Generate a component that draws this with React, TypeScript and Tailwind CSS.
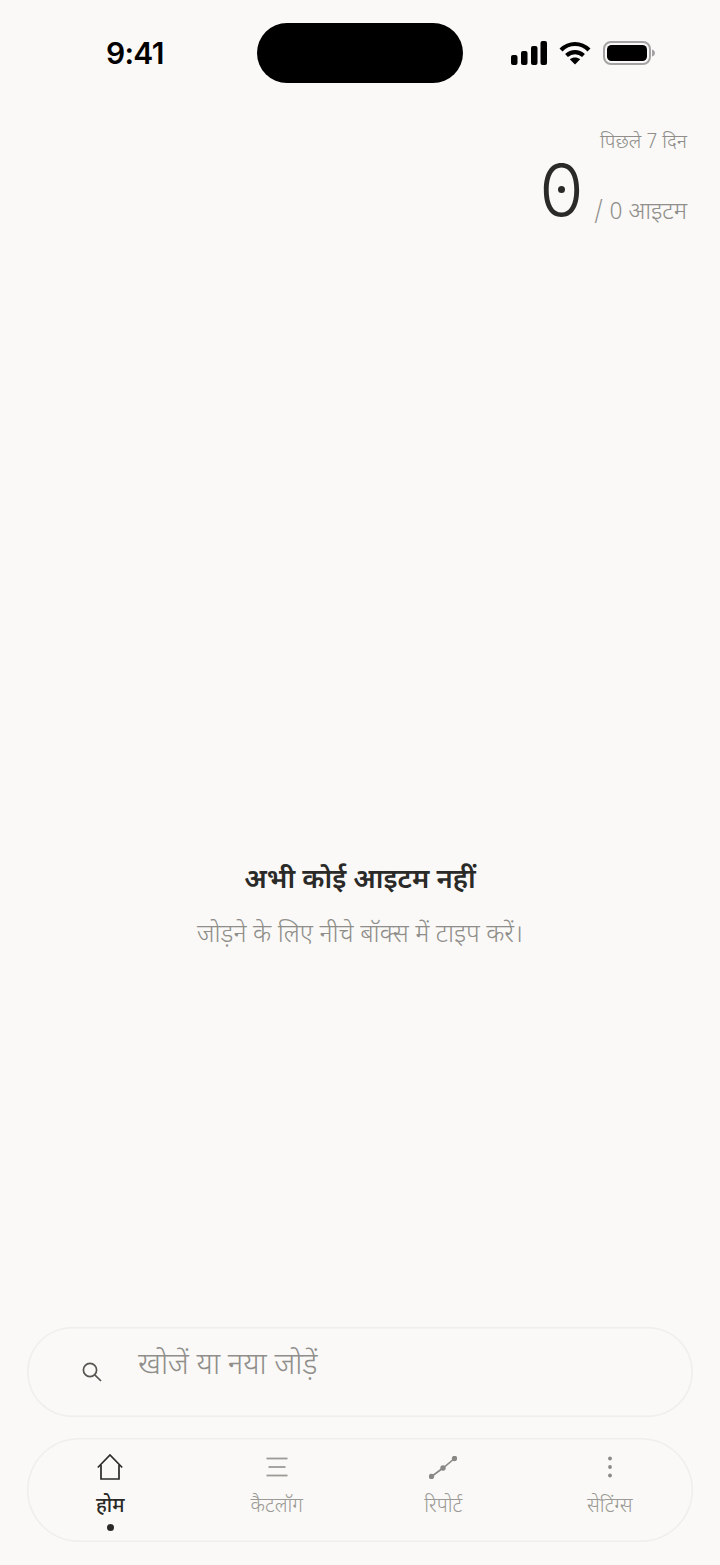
const deva = "font-['Noto_Sans_Devanagari','Noto_Sans','Lohit_Devanagari','Liberation_Sans',sans-serif]";

function StatusBar() {
    return (
        <div className="flex items-start h-[106px] pt-[23px] pl-[106px] pr-[64px]">
            <span className="w-[151px] mt-[11px] text-[30px] leading-[38px] tracking-[-0.7px] font-semibold text-black font-['Inter',sans-serif]">9:41</span>
            <div className="w-[206px] h-[60px] bg-black rounded-full" />
            <div className="flex items-center gap-[12px] ml-[48px] h-[60px]">
                <svg width="36" height="24" viewBox="0 0 36 24" fill="#000">
                    <rect x="0" y="14" width="6.5" height="10" rx="2" />
                    <rect x="10" y="10" width="6.5" height="14" rx="2" />
                    <rect x="20" y="5" width="6.5" height="19" rx="2" />
                    <rect x="29.5" y="0" width="6.5" height="24" rx="2" />
                </svg>
                <svg width="32" height="24" viewBox="0 0 32 24" fill="none" stroke="#000" strokeWidth="4.2">
                    <path d="M2 9 C10 1 22 1 30 9" />
                    <path d="M7.5 14.5 C12.5 10 19.5 10 24.5 14.5" />
                    <path d="M16 23.5 L10.8 18.2 C13.8 15.8 18.2 15.8 21.2 18.2 Z" fill="#000" stroke="none" />
                </svg>
                <svg width="52" height="24" viewBox="0 0 52 24" fill="none">
                    <rect x="1" y="1" width="46" height="22" rx="7" stroke="#a3a3a3" strokeWidth="2" />
                    <rect x="4" y="4" width="40" height="16" rx="4.5" fill="#000" />
                    <path d="M49 8.5 C51 9 52 10.5 52 12 C52 13.5 51 15 49 15.5 Z" fill="#a3a3a3" />
                </svg>
            </div>
        </div>
    );
}

function NavItem({ label, active, children }: { label: string; active?: boolean; children: React.ReactNode }) {
    return (
        <div className="relative flex flex-col items-center">
            <div className="h-[30px] w-[30px] flex items-center justify-center">{children}</div>
            <span className={["mt-[13px] text-[20px] leading-[24px]", active ? "text-[#2a2a28] font-medium" : "text-[#9b9a96] font-light"].join(" ")}>{label}</span>
            {active && <span className="absolute top-[72px] w-[7px] h-[7px] rounded-full bg-[#2a2a28]" />}
        </div>
    );
}

export default function App() {
    return (
        <div className={["flex flex-col h-[1565px] bg-[#faf9f7] overflow-hidden", deva].join(" ")}>
            <StatusBar />

            <div className="flex flex-col items-end pr-[33px] pt-[26px]">
                <span className="text-[19.5px] leading-[24px] font-light text-[#8f8e8a]">पिछले 7 दिन</span>
                <div className="flex items-baseline mt-[1px]">
                    <span className="relative text-[72px] leading-[66px] text-[#2a2a28] font-['Inter',sans-serif] font-light">
                        0
                        <span className="absolute left-1/2 top-1/2 -ml-[3px] -mt-[4px] w-[7px] h-[7px] rounded-full bg-[#2a2a28]" />
                    </span>
                    <span className="ml-[10px] translate-y-[3px] text-[23.5px] font-light text-[#8f8e8a]">/ 0 आइटम</span>
                </div>
            </div>

            <div className="flex-1 flex flex-col items-center pt-[635px]">
                <h2 className="text-[27.5px] leading-[36px] font-semibold text-[#2a2a28]">अभी कोई आइटम नहीं</h2>
                <p className="mt-[19px] text-[25px] leading-[36px] font-light text-[#8f8e8a]">जोड़ने के लिए नीचे बॉक्स में टाइप करें।</p>
            </div>

            <div className="flex flex-col gap-[21px] px-[27px] pb-[23px]">
                <div className="flex items-center h-[90px] pl-[55px] rounded-full ring-[1.5px] ring-inset ring-[#efeeeb]">
                    <svg width="20" height="20" viewBox="0 0 20 20" fill="none" stroke="#55544f" strokeWidth="1.7">
                        <circle cx="8" cy="8" r="6.6" />
                        <path d="M12.8 12.8 L19 19" />
                    </svg>
                    <span className="ml-[36px] mb-[10px] text-[29.6px] leading-[36px] font-light text-[#8f8e8a]">खोजें या नया जोड़ें</span>
                </div>

                <div className="grid grid-cols-4 h-[104px] pt-[14px] rounded-full ring-[1.5px] ring-inset ring-[#efeeeb]">
                    <NavItem label="होम" active>
                        <svg width="26" height="26" viewBox="0 0 26 26" fill="none" stroke="#2a2a28" strokeWidth="1.7">
                            <path d="M0.8 13.5 L13 1 L25.2 13.5" />
                            <path d="M4 11 V25 H22 V11" />
                        </svg>
                    </NavItem>
                    <NavItem label="कैटलॉग">
                        <svg width="22" height="20" viewBox="0 0 22 20" fill="none" stroke="#9b9a96" strokeWidth="1.8">
                            <path d="M0.5 1.5 H21.5" />
                            <path d="M2.5 10 H19.5" />
                            <path d="M0.5 18.5 H21.5" />
                        </svg>
                    </NavItem>
                    <NavItem label="रिपोर्ट">
                        <svg width="28" height="23" viewBox="0 0 28 23" fill="#8a8985" stroke="#8a8985" strokeWidth="1.6">
                            <path d="M2.5 20.5 L14 12 L25.5 2.5" fill="none" />
                            <circle cx="2.5" cy="20.5" r="1.9" />
                            <circle cx="14" cy="12" r="1.9" />
                            <circle cx="25.5" cy="2.5" r="1.9" />
                        </svg>
                    </NavItem>
                    <NavItem label="सेटिंग्स">
                        <svg width="6" height="22" viewBox="0 0 6 22" fill="#8a8985">
                            <circle cx="3" cy="2.5" r="1.9" />
                            <circle cx="3" cy="11" r="1.9" />
                            <circle cx="3" cy="19.5" r="1.9" />
                        </svg>
                    </NavItem>
                </div>
            </div>
        </div>
    );
}
